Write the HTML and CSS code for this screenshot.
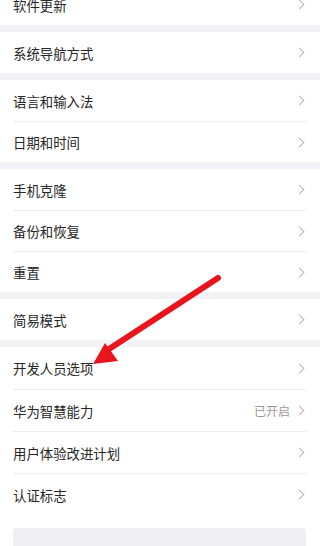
FILE: index.html
```html
<!DOCTYPE html>
<html lang="zh">
<head>
<meta charset="utf-8">
<link rel="stylesheet" href="styles.css">
</head>
<body>
<div class="page">
  <div class="card">
    <div class="row"><span class="label">软件更新</span><span class="chev"></span></div>
  </div>
  <div class="card">
    <div class="row"><span class="label">系统导航方式</span><span class="chev"></span></div>
  </div>
  <div class="card">
    <div class="row"><span class="label">语言和输入法</span><span class="chev"></span></div>
    <div class="row"><span class="label">日期和时间</span><span class="chev"></span></div>
  </div>
  <div class="card">
    <div class="row"><span class="label">手机克隆</span><span class="chev"></span></div>
    <div class="row"><span class="label">备份和恢复</span><span class="chev"></span></div>
    <div class="row"><span class="label">重置</span><span class="chev"></span></div>
  </div>
  <div class="card">
    <div class="row"><span class="label">简易模式</span><span class="chev"></span></div>
  </div>
  <div class="card last">
    <div class="row"><span class="label">开发人员选项</span><span class="chev"></span></div>
    <div class="row"><span class="label">华为智慧能力</span><span class="value">已开启</span><span class="chev"></span></div>
    <div class="row"><span class="label">用户体验改进计划</span><span class="chev"></span></div>
    <div class="row"><span class="label">认证标志</span><span class="chev"></span></div>
    <div class="bottom-box"></div>
  </div>
</div>
<svg class="arrow" width="320" height="546" viewBox="0 0 320 546">
  <line x1="218" y1="278" x2="106" y2="351" stroke="#e8161c" stroke-width="6" stroke-linecap="round"/>
  <polygon points="93,364 105,343 118,361" fill="#e8161c"/>
</svg>
</body>
</html>
```

FILE: styles.css
```css
html, body {
  margin: 0;
  padding: 0;
  background: #f2f1f5;
}
body {
  width: 320px;
  height: 546px;
  overflow: hidden;
  position: relative;
  font-family: "Noto Sans CJK SC", "Noto Sans", sans-serif;
}
.page {
  display: flex;
  flex-direction: column;
  gap: 7px;
  margin-top: -16px;
}
.card {
  background: #ffffff;
  padding: 0 14px 0 13px;
}
.row {
  box-sizing: border-box;
  height: 41px;
  display: flex;
  align-items: center;
  border-top: 1px solid #ececee;
}
.row:first-child {
  border-top: none;
}
.last .row {
  height: 42px;
}
.label {
  flex: 1;
  font-size: 13.4px;
  color: #262626;
}
.value {
  font-size: 12px;
  color: #9a9a9a;
  margin-right: 6px;
}
.chev {
  width: 6px;
  height: 6px;
  border-top: 1.1px solid #b4b4b4;
  border-right: 1.1px solid #b4b4b4;
  transform: rotate(45deg);
  margin-right: 3px;
}
.bottom-box {
  margin-top: 13px;
  height: 20px;
  background: #f0eff3;
  border-radius: 3px 3px 0 0;
}
.arrow {
  position: absolute;
  left: 0;
  top: 0;
}
```
